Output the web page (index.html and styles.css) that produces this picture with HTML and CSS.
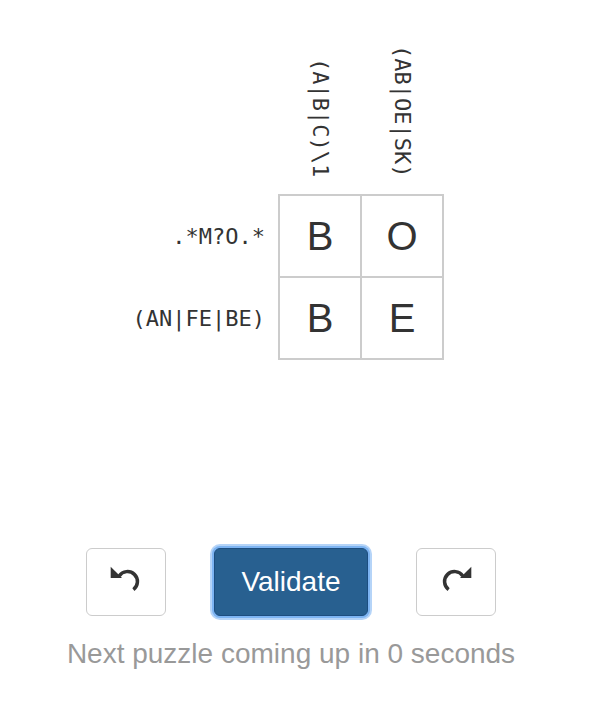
FILE: index.html
```html
<!DOCTYPE html>
<html lang="en">
<head>
<meta charset="utf-8">
<title>Regex crossword</title>
<link rel="stylesheet" href="styles.css">
</head>
<body>
<div class="page">
  <div class="puzzle">
    <div class="col-heads">
      <div class="corner"></div>
      <div class="heads">
        <div class="head"><span class="head-text">(A|B|C)\1</span></div>
        <div class="head"><span class="head-text">(AB|OE|SK)</span></div>
      </div>
    </div>
    <div class="body">
      <div class="row-labels">
        <div class="row-label">.*M?O.*</div>
        <div class="row-label">(AN|FE|BE)</div>
      </div>
      <div class="board">
        <div class="cell">B</div>
        <div class="cell">O</div>
        <div class="cell">B</div>
        <div class="cell">E</div>
      </div>
    </div>
  </div>
  <div class="controls">
    <button class="btn btn-icon" type="button" aria-label="Undo">
      <svg class="icon" width="32" height="32" viewBox="0 0 32 32"><path d="M9.2 9.9 A10 10 0 1 1 23.4 23.6" fill="none" stroke="#333" stroke-width="3.5"/><path d="M0.7 0.7 V12 H12 Z" fill="#333"/></svg>
    </button>
    <button class="btn btn-primary" type="button">Validate</button>
    <button class="btn btn-icon" type="button" aria-label="Redo">
      <svg class="icon flip" width="32" height="32" viewBox="0 0 32 32"><path d="M9.2 9.9 A10 10 0 1 1 23.4 23.6" fill="none" stroke="#333" stroke-width="3.5"/><path d="M0.7 0.7 V12 H12 Z" fill="#333"/></svg>
    </button>
  </div>
  <p class="status">Next puzzle coming up in 0 seconds</p>
</div>
</body>
</html>
```
FILE: styles.css
```css
html, body {
  margin: 0;
  padding: 0;
  background: #fff;
}
body {
  font-family: "Liberation Sans", Arial, Helvetica, sans-serif;
  color: #333;
}
.page {
  width: 582px;
}
.puzzle {
  display: flex;
  flex-direction: column;
  align-items: center;
}
.col-heads {
  display: flex;
  height: 194px;
}
.corner {
  width: 140px;
}
.heads {
  display: flex;
  gap: 2px;
  width: 166px;
  box-sizing: border-box;
  padding: 0 2px 17px 2px;
  align-items: flex-end;
}
.head {
  width: 80px;
  display: flex;
  justify-content: center;
  align-items: flex-end;
}
.head-text {
  writing-mode: vertical-rl;
  font-family: "DejaVu Sans Mono", "Liberation Mono", monospace;
  font-size: 22px;
  line-height: 26px;
  color: #333;
  white-space: nowrap;
}
.body {
  display: flex;
}
.row-labels {
  width: 140px;
  box-sizing: border-box;
  padding: 2px 13px 2px 0;
  display: flex;
  flex-direction: column;
  gap: 2px;
}
.row-label {
  height: 80px;
  display: flex;
  align-items: center;
  justify-content: flex-end;
  white-space: nowrap;
  font-family: "DejaVu Sans Mono", "Liberation Mono", monospace;
  font-size: 22px;
  color: #333;
}
.board {
  display: grid;
  grid-template-columns: 80px 80px;
  grid-auto-rows: 80px;
  gap: 2px;
  padding: 2px;
  background: #ccc;
}
.cell {
  background: #fff;
  display: flex;
  align-items: center;
  justify-content: center;
  font-size: 40px;
  color: #333;
}
.controls {
  display: flex;
  justify-content: center;
  gap: 48px;
  margin-top: 188px;
}
.btn {
  height: 68px;
  box-sizing: border-box;
  border-radius: 6px;
  padding: 0;
  margin: 0;
  display: flex;
  align-items: center;
  justify-content: center;
  font-family: "Liberation Sans", Arial, Helvetica, sans-serif;
  cursor: pointer;
}
.btn-icon {
  width: 80px;
  background: #fff;
  border: 1px solid #ccc;
}
.icon {
  display: block;
}
.flip {
  transform: scaleX(-1);
}
.btn-primary {
  width: 154px;
  background: #286090;
  border: 1px solid #1d4e80;
  color: #fff;
  font-size: 28px;
  box-shadow: 0 0 0 2px #7db4f2, 0 0 0 4px #b5d4f8;
}
.status {
  margin: 22px 0 0;
  text-align: center;
  font-size: 28px;
  line-height: 32px;
  color: #999;
}
```
